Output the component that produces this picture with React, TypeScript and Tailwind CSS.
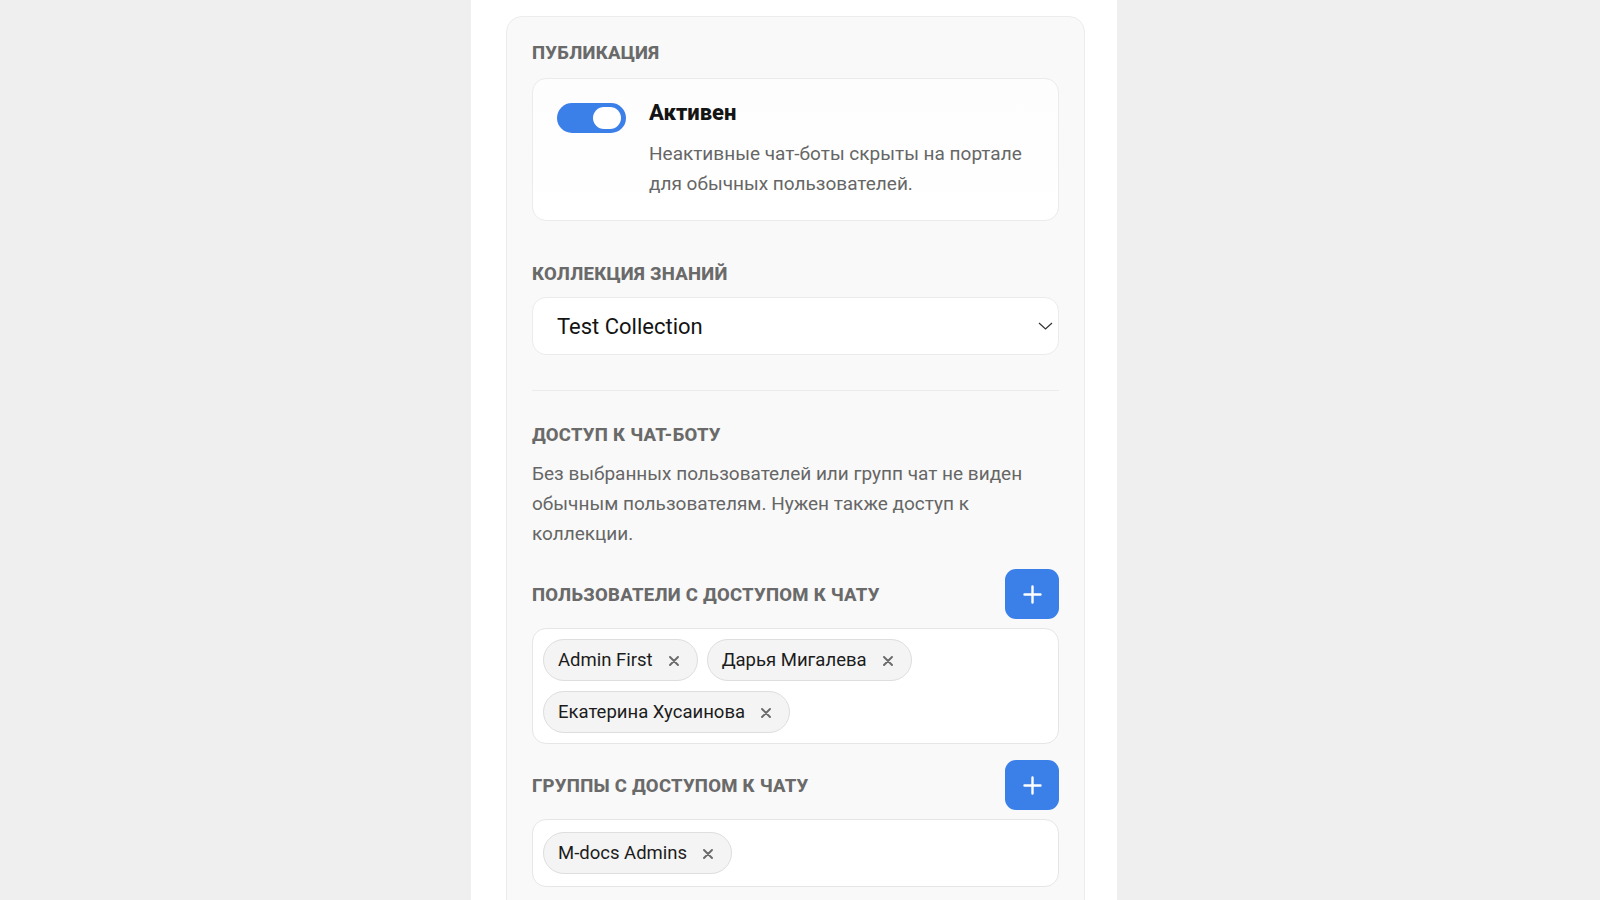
const users = ["Admin First", "Дарья Мигалева", "Екатерина Хусаинова"];
const groups = ["M-docs Admins"];

function SectionTitle({ children, className = "" }: { children: React.ReactNode; className?: string }) {
  return (
    <h3 className={`text-[18.5px] leading-[26px] font-extrabold uppercase tracking-[0.015em] text-[#6a6a6a] ${className}`}>
      {children}
    </h3>
  );
}

function Chip({ label }: { label: string }) {
  return (
    <span className="flex h-[42px] items-center gap-[16px] rounded-full border border-[#dedede] bg-[#f4f4f4] pt-px pl-[14px] pr-[18px] text-[18.5px] text-[#1c1c1c]">
      {label}
      <svg width="10" height="10" viewBox="0 0 10 10" fill="none" stroke="#6a6a6a" strokeWidth="1.9" strokeLinecap="round">
        <path d="M1 1l8 8M9 1L1 9" />
      </svg>
    </span>
  );
}

function PlusButton() {
  return (
    <button
      type="button"
      className="flex h-[50px] w-[54px] items-center justify-center rounded-[11px] bg-[#3b7fe9] text-white"
    >
      <svg width="19" height="19" viewBox="0 0 19 19" fill="none" stroke="currentColor" strokeWidth="2.4" strokeLinecap="round">
        <path d="M9.5 1.5v16M1.5 9.5h16" />
      </svg>
    </button>
  );
}

function ChipBox({ items }: { items: string[] }) {
  return (
    <div className="mt-[9px] flex min-h-[68px] flex-wrap content-center gap-x-[9px] gap-y-[10px] rounded-[14px] border border-[#e6e6e6] bg-white p-[10px]">
      {items.map((u) => (
        <Chip key={u} label={u} />
      ))}
    </div>
  );
}

export default function App() {
  return (
    <div
      className="flex h-screen justify-center overflow-hidden bg-[#efefef] pr-[12px]"
      style={{ fontFamily: "Roboto, 'Noto Sans', sans-serif" }}
    >
      <div className="w-[646px] bg-white pl-[35px] pr-[32px] pt-[16px]">
        <div className="rounded-[16px] border border-[#ececec] bg-[#f9f9f9] px-[25px] pt-[23px] pb-10">
          <SectionTitle>Публикация</SectionTitle>

          {/* status toggle */}
          <div className="mt-[12px] flex gap-[23px] rounded-[14px] border border-[#ebebeb] bg-gradient-to-b from-[#fdfdfd] to-white px-[24px] pt-[20px] pb-[21px]">
            <div className="mt-[4px] flex h-[30px] w-[69px] shrink-0 items-center justify-end rounded-full bg-[#3b7fe9] pr-[5px]">
              <div className="h-[22px] w-[28px] rounded-full bg-white" />
            </div>
            <div>
              <div className="text-[22px] leading-[28px] font-extrabold text-[#141414]">Активен</div>
              <p className="mt-[12px] text-[19px] leading-[30px] text-[#666666]">
                Неактивные чат-боты скрыты на портале для обычных пользователей.
              </p>
            </div>
          </div>

          <SectionTitle className="mt-[40px]">Коллекция знаний</SectionTitle>
          <div className="mt-[10px] flex h-[58px] items-center justify-between rounded-[14px] border border-[#ebebeb] bg-white pl-[24px] pr-[5px]">
            <span className="text-[22px] text-[#141414]">Test Collection</span>
            <svg width="15" height="8" viewBox="0 0 15 8" fill="none" stroke="#333" strokeWidth="1.2">
              <path d="M1 1l6.5 6L14 1" />
            </svg>
          </div>

          <div className="mt-[35px] h-px bg-[#ebebeb]" />

          <SectionTitle className="mt-[31px]">Доступ к чат-боту</SectionTitle>
          <p className="mt-[11px] text-[19px] leading-[30px] text-[#666666]">
            Без выбранных пользователей или групп чат не виден обычным пользователям. Нужен также доступ к коллекции.
          </p>

          <div className="mt-[20px] flex items-center justify-between">
            <SectionTitle className="pt-[2px]">Пользователи с доступом к чату</SectionTitle>
            <PlusButton />
          </div>
          <ChipBox items={users} />

          <div className="mt-[16px] flex items-center justify-between">
            <SectionTitle className="pt-[2px]">Группы с доступом к чату</SectionTitle>
            <PlusButton />
          </div>
          <ChipBox items={groups} />
        </div>
      </div>
    </div>
  );
}
